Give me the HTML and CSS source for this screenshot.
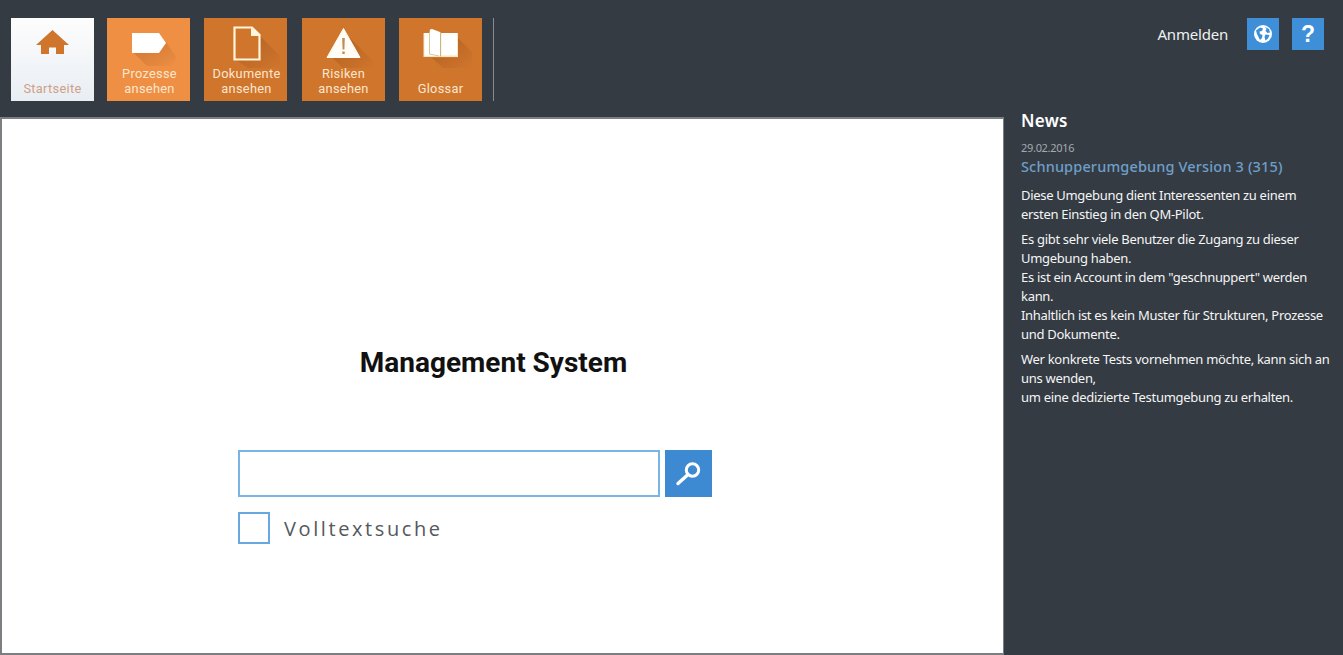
FILE: index.html
```html
<!DOCTYPE html>
<html lang="de">
<head>
<meta charset="utf-8">
<title>Management System</title>
<link rel="stylesheet" href="styles.css">
</head>
<body>
<svg class="defs" width="0" height="0" aria-hidden="true">
  <defs>
    <linearGradient id="fade" x1="0" y1="0" x2="1" y2="1">
      <stop offset="0" stop-color="#a85c22" stop-opacity="0.8"/>
      <stop offset="1" stop-color="#a85c22" stop-opacity="0"/>
    </linearGradient>
    <linearGradient id="fade-light" x1="0" y1="0" x2="1" y2="1">
      <stop offset="0" stop-color="#c46f2c" stop-opacity="0.8"/>
      <stop offset="1" stop-color="#c46f2c" stop-opacity="0"/>
    </linearGradient>
  </defs>
</svg>
<header class="topbar">
  <nav class="tiles">
    <a class="tile tile-home">
      <svg class="tile-icon" viewBox="0 0 83 50" width="83" height="50"><path d="M41.500 12L58 27H53V36H45V29.500H38V36H30V27H25Z" fill="#d0752c"/></svg>
      <span class="tile-label">Startseite</span>
    </a>
    <a class="tile tile-light">
      <svg class="tile-icon" viewBox="0 0 83 50" width="83" height="50"><path d="M50 35H27L40 48H64L70 40L59 24Z" fill="url(#fade-light)"/><path d="M25 15H52L59 25L52 35H25Z" fill="#fff"/></svg>
      <span class="tile-label">Prozesse<br>ansehen</span>
    </a>
    <a class="tile tile-doc">
      <svg class="tile-icon" viewBox="0 0 83 50" width="83" height="50"><path d="M56 18L76 38V50H44L32 42H56Z" fill="url(#fade)"/><path d="M30.500 9.500H48L55.500 17V41.500H30.500Z" fill="#d0752c" stroke="#fff6dc" stroke-width="2.200"/><path d="M47 9V18H56Z" fill="#fff6dc"/></svg>
      <span class="tile-label">Dokumente<br>ansehen</span>
    </a>
    <a class="tile tile-risk">
      <svg class="tile-icon" viewBox="0 0 83 50" width="83" height="50"><path d="M46 18L58 39.500H30L42 51H72V44Z" fill="url(#fade)"/><path d="M41.500 10.500L58 39.500H25Z" fill="#fffdf5" stroke="#fffdf5" stroke-width="1" stroke-linejoin="round"/><path d="M40.200 20H42.800L42.400 31.500H40.600Z" fill="#c08a55"/><rect x="40.300" y="33.500" width="2.400" height="2.500" fill="#c08a55"/></svg>
      <span class="tile-label">Risiken<br>ansehen</span>
    </a>
    <a class="tile">
      <svg class="tile-icon" viewBox="0 0 83 50" width="83" height="50"><path d="M59 20L73 34V50H44L33 40H59Z" fill="url(#fade)"/><path d="M24.500 15H59V39H24.500Z" fill="#f4e7c2"/><path d="M25.500 38V15L30.500 15L31 11.500L33 11L41 14V38Z" fill="#fff"/><path d="M30.500 15V36L40 38" fill="none" stroke="#d9c89a" stroke-width="1"/><path d="M42.500 15H58V37.500H42.500Z" fill="#fff"/><path d="M41.500 14V38.500" stroke="#c9b688" stroke-width="1"/></svg>
      <span class="tile-label">Glossar</span>
    </a>
    <span class="divider"></span>
  </nav>
  <div class="account">
    <span class="login">Anmelden</span>
    <a class="square-btn">
      <svg viewBox="0 0 20 20" width="20" height="20"><circle cx="10" cy="10" r="9" fill="#fff"/><path d="M3 6.500L7 3.500L10 4.500L9 7L6.500 7.500L7 10L9.500 11L9 14L7 16L5.500 13L4 10ZM12 3L16 5L17 8.500L14.500 9L12.500 7L13.500 5ZM12.500 10.500L16.500 11L15 14.500L12.500 16.500L11.500 13Z" fill="#3e8fd8"/></svg>
    </a>
    <a class="square-btn question">?</a>
  </div>
</header>
<div class="content">
  <main class="panel">
    <h1 class="system-title">Management System</h1>
    <form class="search">
      <div class="search-row">
        <input class="search-input" type="text" aria-label="Suche">
        <button class="search-btn" type="button" aria-label="Suchen">
          <svg viewBox="0 0 30 30" width="30" height="30"><circle cx="18.500" cy="11" r="6.200" fill="none" stroke="#fff" stroke-width="3"/><path d="M13.500 16L4 24.500" stroke="#fff" stroke-width="3.400" stroke-linecap="round"/></svg>
        </button>
      </div>
      <label class="fulltext"><span class="check"></span><span class="fulltext-label">Volltextsuche</span></label>
    </form>
  </main>
  <aside class="news">
    <h2 class="news-heading">News</h2>
    <div class="news-date">29.02.2016</div>
    <h3 class="news-title">Schnupperumgebung Version 3 (315)</h3>
    <p>Diese Umgebung dient Interessenten zu einem<br>ersten Einstieg in den QM-Pilot.</p>
    <p>Es gibt sehr viele Benutzer die Zugang zu dieser<br>Umgebung haben.<br>Es ist ein Account in dem "geschnuppert" werden<br>kann.<br>Inhaltlich ist es kein Muster für Strukturen, Prozesse<br>und Dokumente.</p>
    <p>Wer konkrete Tests vornehmen möchte, kann sich an<br>uns wenden,<br>um eine dedizierte Testumgebung zu erhalten.</p>
  </aside>
</div>
</body>
</html>
```
FILE: styles.css
```css
* { box-sizing: border-box; }
html, body { margin: 0; height: 100%; }
body {
  background: #343b43;
  color: #fff;
  font-family: "Noto Sans", "Open Sans", sans-serif;
  overflow: hidden;
}
.defs { display: block; height: 0; }
.topbar {
  height: 117px;
  display: flex;
  justify-content: space-between;
  padding: 18px 19px 0 11px;
}
.tiles { display: flex; gap: 14px; height: 83px; }
.tile {
  width: 83px;
  height: 83px;
  background: #d0752c;
  color: #fbe6cf;
  position: relative;
  overflow: hidden;
  display: block;
  font-family: Roboto, sans-serif;
  font-size: 12.800px;
  line-height: 15px;
  text-align: center;
}
.tile-light { background: #ee8f44; margin-left: -1px; }
.tile-risk { margin-left: 1px; }
.tile-home {
  background: linear-gradient(#fdfdfd, #e9eef3);
  color: #cf9f8a;
}
.tile-icon { display: block; }
.tile-label {
  position: absolute;
  left: 0;
  right: 0;
  bottom: 5px;
  letter-spacing: 0.300px;
}
.tile-light .tile-label, .tile-doc .tile-label { left: 2px; }
.divider {
  width: 1px;
  height: 83px;
  margin-left: -3px;
  background: #858b91;
}
.account {
  display: flex;
  align-items: flex-start;
  gap: 13px;
}
.login {
  font-size: 15px;
  line-height: 32px;
  color: #eef0f1;
  margin-right: 6px;
  letter-spacing: -0.2px;
}
.square-btn {
  width: 32px;
  height: 32px;
  background: #3e8fd8;
  display: flex;
  align-items: center;
  justify-content: center;
}
.question {
  font-family: "Liberation Sans", sans-serif;
  font-weight: 700;
  font-size: 23px;
}
.content {
  display: flex;
  height: 538px;
}
.panel {
  width: 1004px;
  background: #fff;
  border: 2px solid #7c7f82;
  border-right-width: 1px;
  color: #111;
  padding-top: 227px;
}
.system-title {
  margin: 0;
  width: 983px;
  text-align: center;
  font-family: Roboto, sans-serif;
  font-weight: 700;
  font-size: 28px;
  line-height: 34px;
  letter-spacing: 0;
}
.search { margin: 70px 0 0 236px; }
.search-row { display: flex; gap: 5px; }
.search-input {
  width: 422px;
  height: 47px;
  border: 2px solid #7ab4e4;
  border-radius: 0;
  background: #fff;
  outline: none;
}
.search-btn {
  width: 47px;
  height: 47px;
  padding: 0;
  border: 0;
  background: #3e8ad2;
  display: flex;
  align-items: center;
  justify-content: center;
}
.fulltext {
  display: flex;
  align-items: center;
  gap: 14px;
  margin-top: 15px;
}
.check {
  width: 32px;
  height: 32px;
  border: 2px solid #67a8e0;
}
.fulltext-label {
  font-family: "Open Sans", sans-serif;
  font-size: 20px;
  letter-spacing: 2.600px;
  color: #55585c;
}
.news {
  flex: 1;
  padding: 0 0 0 17px;
  font-size: 13px;
  line-height: 19px;
  letter-spacing: -0.300px;
  color: #f4f5f5;
}
.news-heading {
  margin: -8px 0 0;
  font-size: 17px;
  line-height: 24px;
  font-weight: 600;
  letter-spacing: 0.300px;
  color: #fff;
}
.news-date {
  margin-top: 7px;
  font-size: 11px;
  line-height: 15px;
  color: #a4aab0;
}
.news-title {
  margin: 1px 0 9px;
  font-size: 14.500px;
  line-height: 21px;
  font-weight: 500;
  letter-spacing: 0.150px;
  color: #6f9fc9;
}
.news p { margin: 0 0 6px; }
```
